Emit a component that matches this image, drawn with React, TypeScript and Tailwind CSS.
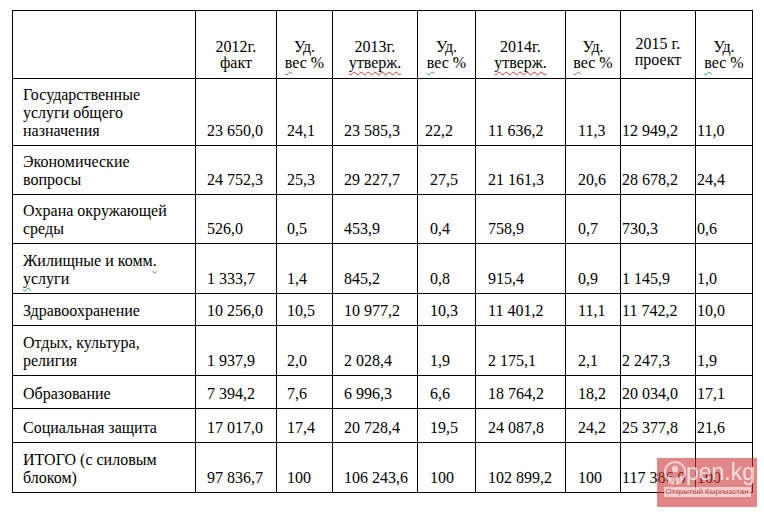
import React from "react";

type Row = {
  name: React.ReactNode;
  values: string[];
  pt: string;
};

// wavy spell-check marks, like in the Word document
function G({ children }: { children: React.ReactNode }) {
  return (
    <span className="underline decoration-wavy decoration-[#3a9a3a] decoration-1 underline-offset-[3px]">
      {children}
    </span>
  );
}

function R({ children }: { children: React.ReactNode }) {
  return (
    <span className="underline decoration-wavy decoration-[#e03030] decoration-1 underline-offset-[3px]">
      {children}
    </span>
  );
}

const rows: Row[] = [
  {
    name: (
      <>
        Государственные
        <br />
        услуги общего
        <br />
        назначения
      </>
    ),
    values: ["23 650,0", "24,1", "23 585,3", "22,2", "11 636,2", "11,3", "12 949,2", "11,0"],
    pt: "pt-[7px]",
  },
  {
    name: (
      <>
        Экономические
        <br />
        вопросы
      </>
    ),
    values: ["24 752,3", "25,3", "29 227,7", "27,5", "21 161,3", "20,6", "28 678,2", "24,4"],
    pt: "pt-[7px]",
  },
  {
    name: (
      <>
        Охрана окружающей
        <br />
        среды
      </>
    ),
    values: ["526,0", "0,5", "453,9", "0,4", "758,9", "0,7", "730,3", "0,6"],
    pt: "pt-[7px]",
  },
  {
    name: (
      <>
        Жилищные и комм<G>.</G>
        <br />
        <G>у</G>слуги
      </>
    ),
    values: ["1 333,7", "1,4", "845,2", "0,8", "915,4", "0,9", "1 145,9", "1,0"],
    pt: "pt-[8px]",
  },
  {
    name: "Здравоохранение",
    values: ["10 256,0", "10,5", "10 977,2", "10,3", "11 401,2", "11,1", "11 742,2", "10,0"],
    pt: "pt-[8px]",
  },
  {
    name: (
      <>
        Отдых, культура,
        <br />
        религия
      </>
    ),
    values: ["1 937,9", "2,0", "2 028,4", "1,9", "2 175,1", "2,1", "2 247,3", "1,9"],
    pt: "pt-[8px]",
  },
  {
    name: "Образование",
    values: ["7 394,2", "7,6", "6 996,3", "6,6", "18 764,2", "18,2", "20 034,0", "17,1"],
    pt: "pt-[9px]",
  },
  {
    name: "Социальная защита",
    values: ["17 017,0", "17,4", "20 728,4", "19,5", "24 087,8", "24,2", "25 377,8", "21,6"],
    pt: "pt-[10px]",
  },
  {
    name: (
      <>
        ИТОГО (с силовым
        <br />
        блоком)
      </>
    ),
    values: ["97 836,7", "100", "106 243,6", "100", "102 899,2", "100", "117 386,0", "100"],
    pt: "pt-[8px]",
  },
];

const pads = [
  "pl-[10px]",
  "pl-[11px]",
  "pl-[10px]",
  "pl-[11px]",
  "pl-[12px]",
  "pl-[12px]",
  "pl-[12px]",
  "pl-px",
  "pl-px",
];

const widths = [
  "w-[183px]",
  "w-[81px]",
  "w-[56px]",
  "w-[85px]",
  "w-[58px]",
  "w-[90px]",
  "w-[55px]",
  "w-[75px]",
  "w-[57px]",
];

const uv = (
  <>
    Уд<G>.</G>
    <br />
    <G>в</G>ес %
  </>
);

const headers: React.ReactNode[] = [
  "",
  <>
    2012г.
    <br />
    факт
  </>,
  uv,
  <>
    2013г.
    <br />
    <R>утверж.</R>
  </>,
  uv,
  <>
    2014г.
    <br />
    <R>утверж.</R>
  </>,
  uv,
  <>
    2015 г.
    <br />
    проект
  </>,
  uv,
];

function Watermark() {
  return (
    <div className="absolute left-[657px] top-[458px] w-[100px] h-[49px] bg-[rgba(205,55,55,0.6)] flex flex-col items-center [font-family:'Liberation_Sans',Arial,sans-serif]">
      <div className="flex items-center mt-[1px] ml-[4px]">
        <svg width="24" height="30" viewBox="0 0 24 30" className="opacity-60">
          <circle cx="12" cy="13" r="10" fill="none" stroke="white" strokeWidth="2.2" />
          <circle cx="12" cy="10" r="3.2" fill="white" />
          <path d="M5 17 L12 19 L19 17 L19 24 L12 26 L5 24 Z" fill="white" />
          <path d="M12 19 L12 26" stroke="rgba(205,55,55,0.8)" strokeWidth="1" />
        </svg>
        <span className="text-[23px] leading-[24px] text-white/75 -ml-[1px] mb-[4px]">pen.kg</span>
      </div>
      <div className="-mt-[2px] w-[87px] h-[10px] bg-white/60 flex items-center justify-center">
        <span className="text-[8px] leading-[10px] text-[#c84848] whitespace-nowrap">Открытый Кыргызстан</span>
      </div>
    </div>
  );
}

export default function App() {
  return (
    <div className="relative w-[764px] h-[515px] overflow-hidden bg-white pt-[10px] pl-[12px] [font-family:'Liberation_Serif','Times_New_Roman',serif] text-[16px] text-black">
      <table className="table-fixed border-collapse border border-black w-[741px]">
        <colgroup>
          {widths.map((w, i) => (
            <col key={i} className={w} />
          ))}
        </colgroup>
        <thead>
          <tr>
            {headers.map((h, i) => (
              <th
                key={i}
                className={`border border-black align-bottom text-center font-normal leading-[16px] ${
                  i === 7 ? "pt-[25px] pb-[10px]" : "pt-[28px] pb-[7px]"
                }`}
              >
                {h}
              </th>
            ))}
          </tr>
        </thead>
        <tbody>
          {rows.map((r, ri) => (
            <tr key={ri}>
              <td className={`border border-black align-bottom text-left leading-[18px] pb-[5px] pl-[10px] ${r.pt}`}>
                {r.name}
              </td>
              {r.values.map((v, vi) => (
                <td
                  key={vi}
                  className={`border border-black align-bottom text-left leading-[18px] pb-[5px] whitespace-nowrap ${r.pt} ${
                    ri === 0 && vi === 3 ? "pl-[7px]" : pads[vi + 1]
                  }`}
                >
                  {v}
                </td>
              ))}
            </tr>
          ))}
        </tbody>
      </table>
      <Watermark />
    </div>
  );
}
